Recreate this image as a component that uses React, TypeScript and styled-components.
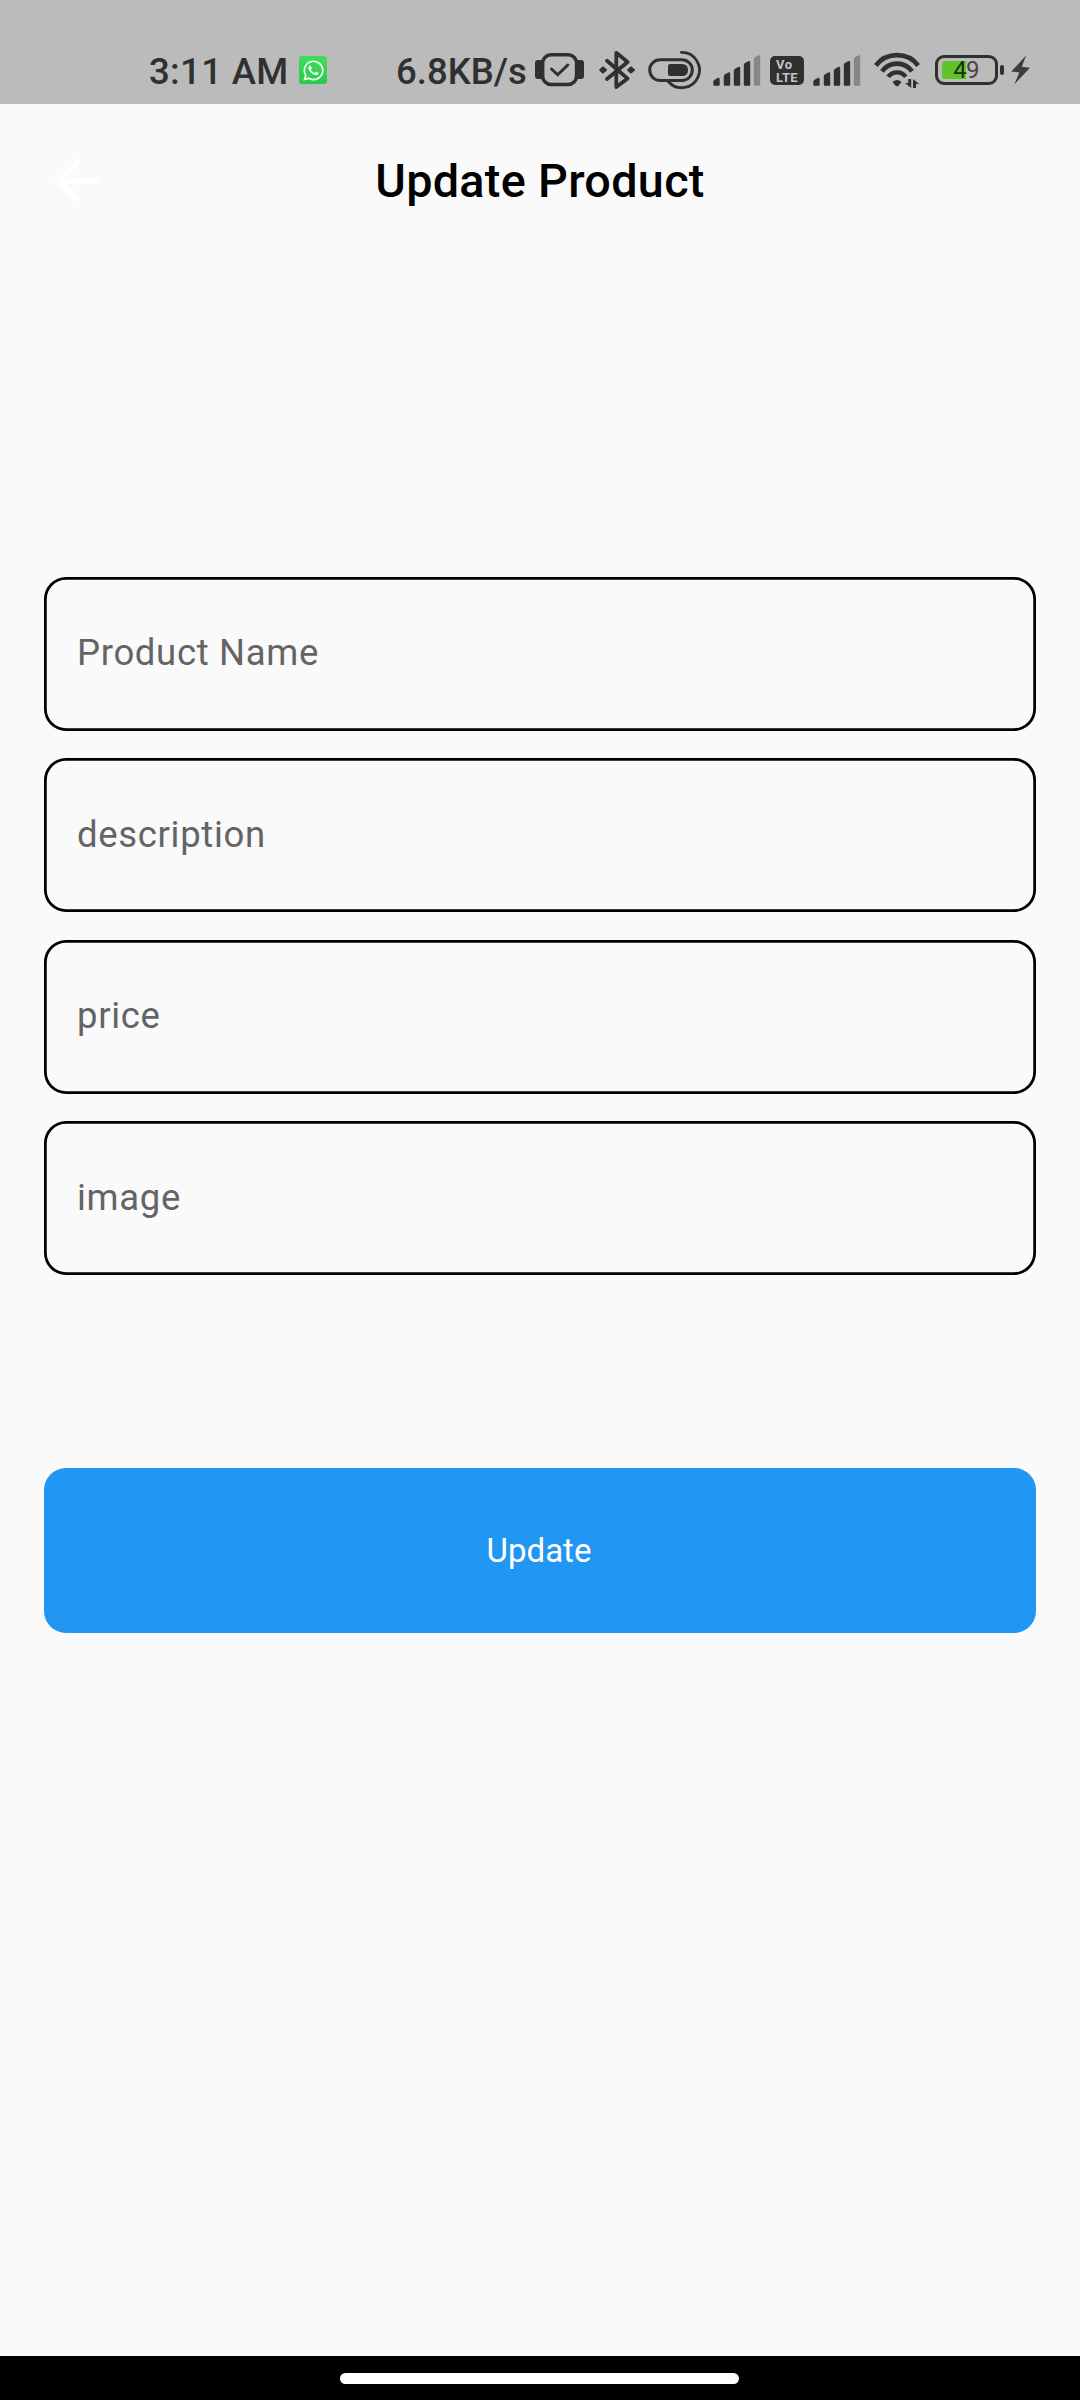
import React from "react";
import styled, { createGlobalStyle } from "styled-components";
import { FaWhatsapp } from "react-icons/fa";

const ink = "#303030";

const GlobalStyle = createGlobalStyle`
  * { box-sizing: border-box; }
  html, body { margin: 0; padding: 0; background: #fafafa; }
  body { font-family: Roboto, "Noto Sans", sans-serif; }
`;

const Screen = styled.div`
  width: 1080px;
  height: 2400px;
  display: flex;
  flex-direction: column;
  background: #fafafa;
  overflow: hidden;
`;

const StatusBar = styled.header`
  height: 104px;
  flex: none;
  display: flex;
  align-items: flex-start;
  padding: 50px 50px 0 149px;
  background: #bbbbbb;
  color: ${ink};
`;

const StatusText = styled.span<{ $width: number; $gap?: number; $spacing?: number }>`
  flex: none;
  width: ${(p) => p.$width}px;
  margin-left: ${(p) => p.$gap ?? 0}px;
  height: 42px;
  line-height: 43px;
  font-size: 36.5px;
  font-weight: 500;
  letter-spacing: ${(p) => p.$spacing ?? 0}px;
  white-space: nowrap;
`;

const Glyph = styled.svg<{ $gap: number }>`
  flex: none;
  display: block;
  height: 40px;
  margin-left: ${(p) => p.$gap}px;
`;

const ChatBadge = styled.span`
  flex: none;
  width: 28px;
  height: 28px;
  margin: 6px 0 0 2px;
  display: flex;
  align-items: center;
  justify-content: center;
  border-radius: 3px;
  background: linear-gradient(#42dc60, #25cc48);
  color: #f4fff4;
  font-size: 23px;
`;

const VolteBadge = styled.span`
  flex: none;
  width: 34px;
  height: 29px;
  margin: 6px 0 0 9px;
  padding: 2px 0 0 6px;
  display: flex;
  flex-direction: column;
  border-radius: 5px;
  background: ${ink};
  color: #c4c4c4;
  line-height: 13px;
  font-weight: 700;
`;

const BadgeLine = styled.span<{ $spacing: number }>`
  font-size: 13px;
  letter-spacing: ${(p) => p.$spacing}px;
`;

const Battery = styled.span`
  flex: none;
  width: 63px;
  height: 30px;
  margin: 5px 0 0 15px;
  padding: 3px 4px;
  display: flex;
  align-items: center;
  border: 3px solid ${ink};
  border-radius: 9px;
`;

const Charge = styled.span`
  width: 24px;
  height: 18px;
  display: flex;
  align-items: center;
  justify-content: flex-end;
  border-radius: 3px 0 0 3px;
  background: #5fc427;
  color: #1c3010;
  font-size: 24px;
  line-height: 18px;
  letter-spacing: -0.8px;
`;

const ChargeRest = styled.span`
  color: #454545;
  font-size: 24px;
  line-height: 18px;
`;

const BatteryTip = styled.span`
  flex: none;
  width: 4px;
  height: 10px;
  margin: 15px 0 0 2px;
  border-radius: 2px;
  background: ${ink};
`;

const AppBar = styled.div`
  height: 154px;
  flex: none;
  display: grid;
  grid-template-columns: 154px 1fr 154px;
  align-items: center;
`;

const BackButton = styled.button`
  height: 66px;
  padding: 0 0 0 44px;
  border: 0;
  background: none;
  display: flex;
`;

const Title = styled.h1`
  margin: 0;
  text-align: center;
  font-size: 46.75px;
  line-height: 56px;
  padding-bottom: 1px;
  font-weight: 500;
  letter-spacing: 0.3px;
  color: #000;
`;

const Form = styled.main`
  flex: 1;
  padding: 318.9px 44px 0;
  display: flex;
  flex-direction: column;
`;

const Fields = styled.div`
  display: flex;
  flex-direction: column;
  gap: 27.5px;
`;

const Field = styled.label`
  height: 154px;
  padding: 0 33px;
  display: flex;
  align-items: center;
  border-radius: 22px;
  box-shadow: inset 0 0 0 2.75px #000;
`;

const Hint = styled.span`
  font-size: 36.5px;
  line-height: 44px;
  padding-bottom: 1.6px;
  letter-spacing: 0.67px;
  color: #646464;
`;

const Submit = styled.button`
  height: 165px;
  margin-top: 192.5px;
  padding: 0.6px 2px 0 0;
  border: 0;
  border-radius: 22px;
  background: #2196f3;
  color: #fff;
  font-family: inherit;
  font-size: 33px;
  line-height: 40px;
`;

const NavBar = styled.footer`
  height: 44px;
  flex: none;
  display: flex;
  justify-content: center;
  padding: 17px 1px 0 0;
  background: #000;
`;

const NavPill = styled.div`
  width: 399px;
  height: 11px;
  border-radius: 6px;
  background: #fff;
`;

const bars = [
  [0, 27.7],
  [10.5, 22.3],
  [20.5, 16.7],
  [30.5, 11],
  [40.5, 5.3],
];

const Signal = ({ gap }: { gap: number }) => (
  <Glyph $gap={gap} width="48" viewBox="0 0 48 40">
    {bars.map(([x, y], i) => (
      <path
        key={x}
        fill={i === 4 ? "#868686" : ink}
        d={`M${x + 0.3} ${y + 4.2}Q${x + 0.3} ${y + 3} ${x + 1.2} ${y + 2.2}L${x + 4.6} ${y + 0.3}Q${x + 6.7} ${y - 0.6} ${x + 6.7} ${y + 1.5}V34.7Q${x + 6.7} 35.7 ${x + 5.7} 35.7H${x + 1.3}Q${x + 0.3} 35.7 ${x + 0.3} 34.7Z`}
      />
    ))}
  </Glyph>
);

const hints = ["Product Name", "description", "price", "image"];

export default function App() {
  return (
    <>
      <GlobalStyle />
      <Screen>
        <StatusBar>
          <StatusText $width={148} $spacing={0.35}>3:11 AM</StatusText>
          <ChatBadge>
            <FaWhatsapp />
          </ChatBadge>
          <StatusText $width={139} $gap={69}>6.8KB/s</StatusText>
          <Glyph $gap={0} width="49" viewBox="0 0 49 40">
            <path fill={ink} d="M7.5 10V29H3Q0 29 0 26V13Q0 10 3 10ZM41.5 10V29H46Q49 29 49 26V13Q49 10 46 10Z" />
            <rect x="7.6" y="4.7" width="34" height="29.8" rx="8.5" fill="none" stroke={ink} strokeWidth="3.6" />
            <path d="M16.5 19L22.7 24.8L32.8 15" fill="none" stroke={ink} strokeWidth="3" strokeLinecap="round" />
          </Glyph>
          <Glyph $gap={15} width="36" viewBox="0 0 36 40">
            <path d="M8 10.8L28.6 28.6L17.3 37V2.8L28.6 12L8 29" fill="none" stroke={ink} strokeWidth="3.8" strokeLinecap="round" strokeLinejoin="round" />
            <path fill={ink} stroke={ink} strokeWidth="2" strokeLinejoin="round" d="M1.2 20L4 17.4L7 20L4 22.6ZM29.2 20L32 17.4L35 20L32 22.6Z" />
          </Glyph>
          <Glyph $gap={13} width="54" viewBox="0 0 54 40">
            <rect x="1.7" y="9.7" width="42.6" height="20.8" rx="10.4" fill="none" stroke={ink} strokeWidth="3" />
            <path fill={ink} d="M22 14H34Q40 14 40 20T34 26H22Q20 26 20 24V16Q20 14 22 14Z" />
            <path d="M33.4 2.3A17.7 17.7 0 1 1 20.5 31.7" fill="none" stroke={ink} strokeWidth="2.8" strokeLinecap="round" />
          </Glyph>
          <Signal gap={11} />
          <VolteBadge>
            <BadgeLine $spacing={0.6}>Vo</BadgeLine>
            <BadgeLine $spacing={0.3}>LTE</BadgeLine>
          </VolteBadge>
          <Signal gap={9} />
          <Glyph $gap={13} width="46" viewBox="0 0 46 40">
            <g fill="none" stroke={ink}>
              <path strokeWidth="4.8" d="M1.8 15.5A27 27 0 0 1 44.2 15.5" />
              <path strokeWidth="4.6" d="M8 21.4A18.4 18.4 0 0 1 38 21.4" />
              <path strokeWidth="4.4" d="M14.2 26.8A11 11 0 0 1 31.8 26.8" />
            </g>
            <path fill={ink} d="M18.5 32Q23 28 27.5 32L24.7 35.6Q23 37.2 21.3 35.6Z" />
            <path fill={ink} d="M34.2 29H37.2V38L31 33H34.2ZM39 38V29L45.2 34H42V38Z" />
          </Glyph>
          <Battery>
            <Charge>4</Charge>
            <ChargeRest>9</ChargeRest>
          </Battery>
          <BatteryTip />
          <Glyph $gap={7} width="19" viewBox="0 0 19 40">
            <path fill="#3c3c3c" d="M15.2 5.3L0.3 21.6L8.4 22.5L3.4 34.3L19 17.8L10.8 16.8Z" />
          </Glyph>
        </StatusBar>
        <AppBar>
          <BackButton aria-label="Back">
            <svg width="66" height="66" viewBox="0 0 24 24" fill="#fff">
              <path d="M20 11H7.83l5.59-5.59L12 4l-8 8 8 8 1.41-1.41L7.83 13H20v-2z" />
            </svg>
          </BackButton>
          <Title>Update Product</Title>
        </AppBar>
        <Form>
          <Fields>
            {hints.map((hint) => (
              <Field key={hint}>
                <Hint>{hint}</Hint>
              </Field>
            ))}
          </Fields>
          <Submit>Update</Submit>
        </Form>
        <NavBar>
          <NavPill />
        </NavBar>
      </Screen>
    </>
  );
}
